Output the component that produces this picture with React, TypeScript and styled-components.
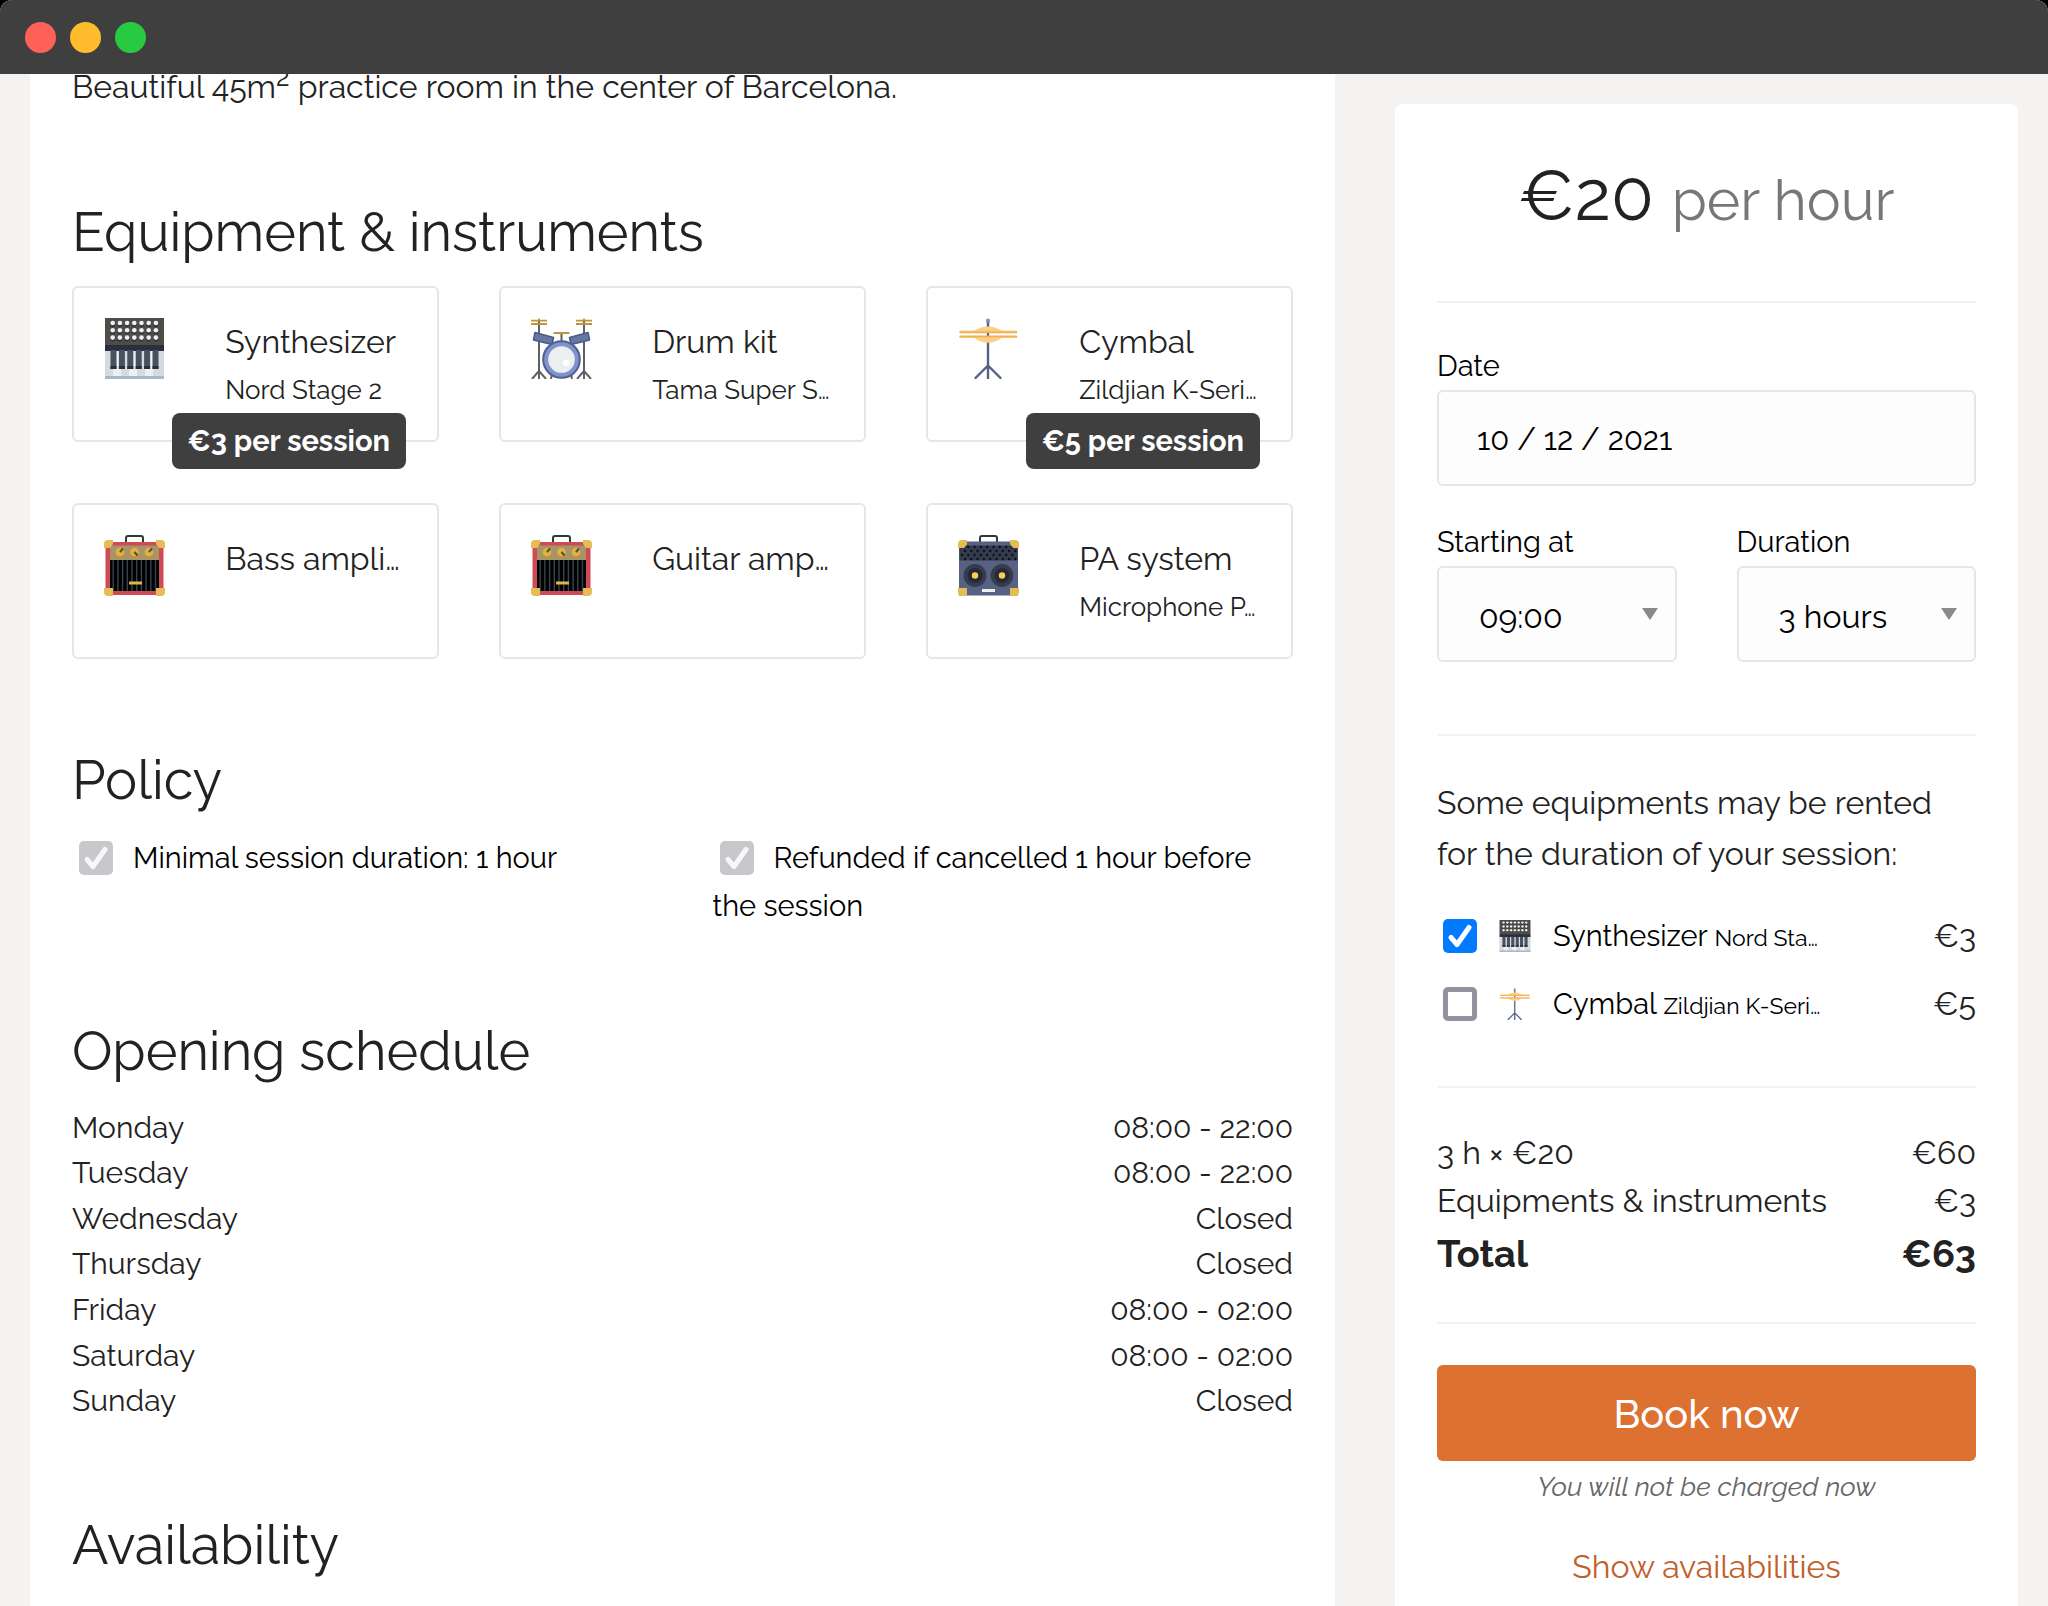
import React from "react";
import styled, { createGlobalStyle } from "styled-components";

const GlobalStyle = createGlobalStyle`
  *, *::before, *::after { box-sizing: border-box; }
  body {
    margin: 0;
    background: #000;
    color: #222;
    font-family: "Raleway", "Lato", "Open Sans", sans-serif;
    font-size: 32px;
    line-height: 48px;
    font-variant-numeric: oldstyle-nums;
  }
  input, select, button { font: inherit; font-variant-numeric: inherit; color: #000; }
`;

const TICK = (color: string) =>
  `url("data:image/svg+xml,%3Csvg xmlns='http://www.w3.org/2000/svg' viewBox='0 0 34 34'%3E%3Cpath d='M8 18.500l6 7L26 8.500' fill='none' stroke='%23${color}' stroke-width='5' stroke-linecap='round' stroke-linejoin='round'/%3E%3C/svg%3E")`;

const Window = styled.div`
  display: flex;
  flex-direction: column;
  height: 100vh;
  overflow: hidden;
  border-radius: 12px 12px 0 0;
  background: #f4f3f1;
`;

const TitleBar = styled.header`
  position: relative;
  z-index: 2;
  flex: none;
  display: flex;
  align-items: center;
  gap: 14px;
  height: 74px;
  padding: 0 25px;
  background: #3f3f3f;
`;

const Light = styled.span<{ $color: string }>`
  width: 31px;
  height: 31px;
  border-radius: 50%;
  background: ${(p) => p.$color};
`;

const Page = styled.div`
  flex: 1;
  min-height: 0;
  display: flex;
  align-items: stretch;
  gap: 60px;
  padding: 0 30px;
`;

const Main = styled.main`
  flex: 1;
  min-width: 0;
  padding: 0 42px;
  background: #fff;
`;

const Description = styled.p`
  margin: -11px 0 0;

  sup {
    font-size: 26px;
    line-height: 0;
  }
`;

const Section = styled.section`
  margin-top: 82px;
`;

const Heading = styled.h2`
  margin: 0 0 15px;
  font-size: 54px;
  font-weight: 400;
  line-height: 78px;
`;

const CardGrid = styled.ul`
  display: grid;
  grid-template-columns: repeat(3, minmax(0, 1fr));
  gap: 61px 60px;
  margin: 0;
  padding: 0;
  list-style: none;
`;

const Card = styled.li`
  position: relative;
  display: grid;
  grid-template-columns: 2fr 3fr;
  min-height: 156px;
  padding: 30px 30px 26px;
  border: 2px solid #e6e6e6;
  border-radius: 6px;
`;

const CardText = styled.div`
  min-width: 0;
`;

const CardName = styled.div`
  white-space: nowrap;
`;

const CardModel = styled(CardName)`
  font-size: 26px;
`;

const PriceBadge = styled.span`
  position: absolute;
  right: 31px;
  bottom: -29px;
  padding: 4px 16px;
  border-radius: 8px;
  background: #3f3f3f;
  color: #fff;
  font-size: 29px;
  font-weight: 700;
`;

const Glyph = styled.svg<{ $size: number }>`
  display: block;
  flex: none;
  width: ${(p) => p.$size}px;
  height: ${(p) => p.$size}px;
`;

const Checkbox = styled.input`
  appearance: none;
  flex: none;
  width: 34px;
  height: 34px;
  margin: 0 0 0 6px;
  border: 5px solid #9391a0;
  border-radius: 5px;
  background: #fff center / 34px 34px no-repeat;

  &:checked {
    border-width: 0;
    background-color: #007aff;
    background-image: ${TICK("ffffff")};
  }

  &:disabled {
    margin-left: 7px;
    margin-right: 20px;
    vertical-align: -7px;
    background-color: #c7c7cc;
    background-image: ${TICK("f7f7f7")};
  }
`;

const PolicyGrid = styled.div`
  display: grid;
  grid-template-columns: repeat(2, minmax(0, 1fr));
  gap: 60px;
  color: #000;
  font-size: 29px;
`;

const Schedule = styled.table`
  width: 100%;
  height: 319px;
  border-collapse: collapse;
  font-size: 30px;
  line-height: 44px;

  th, td {
    padding: 0;
    font-weight: 400;
    text-align: left;
  }

  td {
    text-align: right;
  }
`;

const Booking = styled.form`
  flex: 0 0 623px;
  margin-top: 30px;
  padding: 42px 42px 0;
  border-radius: 8px 8px 0 0;
  background: #fff;
`;

const Price = styled.div`
  padding-bottom: 57px;
  font-size: 70px;
  line-height: 98px;
  text-align: center;

  small {
    color: #777;
    font-size: 57px;
    line-height: 1;
  }
`;

const Block = styled.div<{ $bottom?: number }>`
  padding: 41px 0 ${(p) => p.$bottom ?? 39}px;
  border-top: 2px solid #f2f2f2;
`;

const FieldRow = styled.div`
  display: grid;
  grid-auto-flow: column;
  grid-auto-columns: minmax(0, 1fr);
  gap: 60px;

  & + & {
    margin-top: 34px;
  }
`;

const Field = styled.label`
  display: flex;
  flex-direction: column;
  gap: 2px;
  color: #000;
  font-size: 29px;
  line-height: 44px;
`;

const TextInput = styled.input`
  width: 100%;
  height: 96px;
  padding: 2px 38px 0;
  border: 2px solid #e6e6e6;
  border-radius: 6px;
  background: #fdfdfd;
  font-size: 31px;
`;

const Select = styled.select`
  appearance: none;
  width: 100%;
  height: 96px;
  padding: 5px 40px 0;
  border: 2px solid #e6e6e6;
  border-radius: 6px;
  background: #fdfdfd
    url("data:image/svg+xml,%3Csvg xmlns='http://www.w3.org/2000/svg' viewBox='0 0 16 12'%3E%3Cpath d='M0 0h16L8 12z' fill='%238a8a8a'/%3E%3C/svg%3E")
    right 17px top 40px / 16px 12px no-repeat;
  font-size: 32px;
`;

const Intro = styled.p`
  margin: 0 0 23px;
  line-height: 51px;
`;

const RentalRow = styled.div`
  display: flex;
  align-items: center;
  justify-content: space-between;
  gap: 24px;
  height: 68px;
`;

const RentalLabel = styled.label`
  display: flex;
  align-items: center;
  gap: 22px;
  min-width: 0;
  color: #000;
  font-size: 29px;
`;

const RentalName = styled.span`
  padding-top: 2px;
  white-space: nowrap;

  small {
    font-size: 23px;
  }
`;

const SummaryRow = styled.div<{ $total?: boolean }>`
  display: flex;
  justify-content: space-between;
  font-size: ${(p) => (p.$total ? 38 : 32)}px;
  font-weight: ${(p) => (p.$total ? 700 : 400)};
  line-height: ${(p) => (p.$total ? 58 : 48)}px;
`;

const BookButton = styled.button`
  display: block;
  width: 100%;
  height: 96px;
  padding: 2px 0 0;
  border: 0;
  border-radius: 6px;
  background: #dc7132;
  color: #fff;
  font-size: 40px;
  font-weight: 500;
`;

const Note = styled.p`
  margin: 2px 0 32px;
  color: #666;
  font-size: 27px;
  font-style: italic;
  text-align: center;
`;

const TextLink = styled.a`
  display: block;
  color: #bf602b;
  text-align: center;
  text-decoration: none;
`;

type IconProps = { size?: number };

function SynthIcon({ size = 61 }: IconProps) {
  return (
    <Glyph $size={size} viewBox="0 0 61 61" aria-hidden="true">
      <rect x="1" width="59" height="28" fill="#504c48" />
      {[5, 12.3, 19.6].map((y) =>
        [0, 1, 2, 3, 4, 5, 6].map((i) => (
          <g key={`${y}-${i}`}>
            <circle cx={8.7 + i * 7.2} cy={y + 1.6} r="2.3" fill="#2a2f3d" />
            <circle cx={8.7 + i * 7.2} cy={y} r="2.3" fill="#ecf0f1" />
          </g>
        ))
      )}
      <rect x="1" y="27" width="59" height="6" fill="#2a2f3d" />
      <rect x="1" y="33" width="59" height="28" fill="#ecf0f1" />
      {[1, 17, 33, 49].map((x) => (
        <rect key={x} x={x} y="33" width={x === 49 ? 11 : 8} height="28" fill="#d5dae0" />
      ))}
      <rect x="1" y="58" width="59" height="3" fill="#aab7c4" />
      {[0, 1, 2, 3, 4, 5].map((i) => (
        <g key={i}>
          <rect x={6.5 + i * 8.4} y="32" width="6" height="19" fill="#485160" />
          <rect x={6.5 + i * 8.4} y="48" width="6" height="3" fill="#2a2f3d" />
        </g>
      ))}
    </Glyph>
  );
}

function DrumIcon({ size = 61 }: IconProps) {
  return (
    <Glyph $size={size} viewBox="0 0 61 61" aria-hidden="true">
      <g fill="none" stroke="#5e6064" strokeWidth="2">
        <path d="M8 3v58M8 53l-7 8M8 53l7 8M53 3v58M53 53l-7 8M53 53l7 8M30.5 15v9M21 56l-1 5M40 56l1 5" />
      </g>
      <g stroke="#bd9440" strokeWidth="1.8" fill="none">
        <path d="M0 2.7h16M0 6h16M45 2.7h16M45 6h16M22.5 15h16M8 .5v3M53 .5v3" />
      </g>
      <g fill="#6677a6" stroke="#4c5a86" strokeWidth="1.6" strokeLinejoin="round">
        <path d="M4 14.500l18.500 5-1.500 7L2.500 22z" />
        <path d="M57 14.500l-18.500 5 1.500 7L58.500 22z" />
      </g>
      <circle cx="30.5" cy="41.5" r="18.3" fill="#8093cc" stroke="#4f5f92" strokeWidth="2" />
      <circle cx="30.5" cy="41.5" r="13.3" fill="#ebeff0" />
      <circle cx="35" cy="45" r="3.3" fill="#fff" />
    </Glyph>
  );
}

function CymbalIcon({ size = 61 }: IconProps) {
  return (
    <Glyph $size={size} viewBox="0 0 61 61" aria-hidden="true">
      <path
        d="M30 4v57M30 47.5L17.5 60M30 47.5L42.5 60"
        fill="none"
        stroke="#566084"
        strokeWidth="2.4"
        strokeLinecap="round"
      />
      <path d="M28 1.500q2-2 4 0v3h-4z" fill="#8494cd" />
      <path d="M15 13.500Q30 3.500 45 13.500zM15 19Q30 30.500 45 19z" fill="#fcd08b" />
      <path d="M2.500 14h55.500M2.500 18.700h55.500" stroke="#f2ae4e" strokeWidth="2.4" strokeLinecap="round" />
      <path d="M2.500 13.300h55.500M2.500 19.400h55.500" stroke="#fbc778" strokeWidth="1" />
    </Glyph>
  );
}

function Corners() {
  return (
    <g fill="#e5bc55">
      <path d="M0 13V9q0-4 4-4h5v4l-3 4z" />
      <path d="M61 13V9q0-4-4-4h-5v4l3 4z" />
      <path d="M0 53v4q0 4 4 4h5v-8z" />
      <path d="M61 53v4q0 4-4 4h-5v-8z" />
    </g>
  );
}

function AmpIcon({ size = 61 }: IconProps) {
  return (
    <Glyph $size={size} viewBox="0 0 61 61" aria-hidden="true">
      <path d="M22 7V3q0-2 2-2h13q2 0 2 2v4" fill="none" stroke="#2c3a2e" strokeWidth="2" />
      <rect x="1.5" y="7" width="58" height="53" fill="#cf4a55" />
      <rect x="6" y="10.5" width="49" height="15" fill="#a69566" />
      {[
        [16, "l3-3.5"],
        [30.5, "l3 3.5"],
        [45, "l3-3.5"],
      ].map(([x, d]) => (
        <g key={x}>
          <circle cx={x} cy="18" r="4.5" fill="#c98f35" />
          <circle cx={x} cy="17" r="4.3" fill="#e0af48" />
          <path d={`M${x} 17${d}`} stroke="#5b4a35" strokeWidth="2" />
        </g>
      ))}
      <rect x="6" y="25" width="49" height="31" fill="#000" />
      {[0, 1, 2, 3, 4, 5, 6, 7, 8, 9].map((i) => (
        <rect key={i} x={8.5 + i * 4.7} y="25" width="1.4" height="31" fill="#35454e" />
      ))}
      <rect x="25" y="46.5" width="13" height="3" fill="#e3b44b" />
      <Corners />
    </Glyph>
  );
}

function SpeakerIcon({ size = 61 }: IconProps) {
  return (
    <Glyph $size={size} viewBox="0 0 61 61" aria-hidden="true">
      <path d="M22 7V3q0-2 2-2h13q2 0 2 2v4" fill="none" stroke="#2e3549" strokeWidth="2" />
      <rect x="1" y="6.5" width="59" height="54" fill="#576182" />
      <rect x="1.5" y="10.5" width="58" height="15" fill="#343b4f" />
      {[12, 16, 20, 24].map((y, r) =>
        [0, 1, 2, 3, 4, 5, 6, 7, 8].map((i) => (
          <circle key={`${y}-${i}`} cx={4 + (r % 2) * 3 + i * 6.3} cy={y} r="1.2" fill="#0d0f14" />
        ))
      )}
      {[17, 44].map((x) => (
        <g key={x}>
          <circle cx={x} cy="40.5" r="11.4" fill="#363c4d" />
          <circle cx={x} cy="40.5" r="7.5" fill="#252a38" />
          <circle cx={x} cy="40.5" r="3.2" fill="#fbd04f" />
        </g>
      ))}
      <rect x="24" y="54" width="13" height="3" fill="#ecf0f1" />
      <Corners />
    </Glyph>
  );
}

const EQUIPMENT = [
  { name: "Synthesizer", model: "Nord Stage 2", Icon: SynthIcon, price: 3 },
  { name: "Drum kit", model: "Tama Super S…", Icon: DrumIcon },
  { name: "Cymbal", model: "Zildjian K-Seri…", Icon: CymbalIcon, price: 5 },
  { name: "Bass ampli…", Icon: AmpIcon },
  { name: "Guitar amp…", Icon: AmpIcon },
  { name: "PA system", model: "Microphone P…", Icon: SpeakerIcon },
];

const RENTALS = [
  { name: "Synthesizer", model: "Nord Sta…", Icon: SynthIcon, price: 3, selected: true },
  { name: "Cymbal", model: "Zildjian K-Seri…", Icon: CymbalIcon, price: 5, selected: false },
];

const HOURS = [
  ["Monday", "08:00 - 22:00"],
  ["Tuesday", "08:00 - 22:00"],
  ["Wednesday", "Closed"],
  ["Thursday", "Closed"],
  ["Friday", "08:00 - 02:00"],
  ["Saturday", "08:00 - 02:00"],
  ["Sunday", "Closed"],
];

export default function App() {
  return (
    <>
      <GlobalStyle />
      <Window>
        <TitleBar>
          <Light $color="#ff6058" />
          <Light $color="#ffbd2e" />
          <Light $color="#28ca42" />
        </TitleBar>
        <Page>
          <Main>
            <Description>
              Beautiful 45m<sup>2</sup> practice room in the center of Barcelona.
            </Description>

            <Section>
              <Heading>Equipment &amp; instruments</Heading>
              <CardGrid>
                {EQUIPMENT.map(({ name, model, price, Icon }) => (
                  <Card key={name}>
                    <Icon />
                    <CardText>
                      <CardName>{name}</CardName>
                      {model && <CardModel>{model}</CardModel>}
                    </CardText>
                    {price && <PriceBadge>€{price} per session</PriceBadge>}
                  </Card>
                ))}
              </CardGrid>
            </Section>

            <Section>
              <Heading>Policy</Heading>
              <PolicyGrid>
                <label>
                  <Checkbox type="checkbox" defaultChecked disabled />
                  Minimal session duration: 1 hour
                </label>
                <label>
                  <Checkbox type="checkbox" defaultChecked disabled />
                  Refunded if cancelled 1 hour before the session
                </label>
              </PolicyGrid>
            </Section>

            <Section>
              <Heading>Opening schedule</Heading>
              <Schedule>
                <tbody>
                  {HOURS.map(([day, hours]) => (
                    <tr key={day}>
                      <th scope="row">{day}</th>
                      <td>{hours}</td>
                    </tr>
                  ))}
                </tbody>
              </Schedule>
            </Section>

            <Section id="availability">
              <Heading>Availability</Heading>
            </Section>
          </Main>

          <Booking onSubmit={(e) => e.preventDefault()}>
            <Price>
              €20 <small>per hour</small>
            </Price>

            <Block $bottom={72}>
              <FieldRow>
                <Field>
                  Date
                  <TextInput type="text" defaultValue="10 / 12 / 2021" />
                </Field>
              </FieldRow>
              <FieldRow>
                <Field>
                  Starting at
                  <Select defaultValue="09:00">
                    <option>09:00</option>
                    <option>10:00</option>
                  </Select>
                </Field>
                <Field>
                  Duration
                  <Select defaultValue="3 hours">
                    <option>2 hours</option>
                    <option>3 hours</option>
                  </Select>
                </Field>
              </FieldRow>
            </Block>

            <Block $bottom={48}>
              <Intro>Some equipments may be rented for the duration of your session:</Intro>
              {RENTALS.map(({ name, model, price, selected, Icon }) => (
                <RentalRow key={name}>
                  <RentalLabel>
                    <Checkbox type="checkbox" defaultChecked={selected} />
                    <Icon size={32} />
                    <RentalName>
                      {name} <small>{model}</small>
                    </RentalName>
                  </RentalLabel>
                  <span>€{price}</span>
                </RentalRow>
              ))}
            </Block>

            <Block>
              <SummaryRow>
                <span>3 h × €20</span>
                <span>€60</span>
              </SummaryRow>
              <SummaryRow>
                <span>Equipments &amp; instruments</span>
                <span>€3</span>
              </SummaryRow>
              <SummaryRow $total>
                <span>Total</span>
                <span>€63</span>
              </SummaryRow>
            </Block>

            <Block>
              <BookButton type="submit">Book now</BookButton>
              <Note>You will not be charged now</Note>
              <TextLink href="#availability">Show availabilities</TextLink>
            </Block>
          </Booking>
        </Page>
      </Window>
    </>
  );
}
